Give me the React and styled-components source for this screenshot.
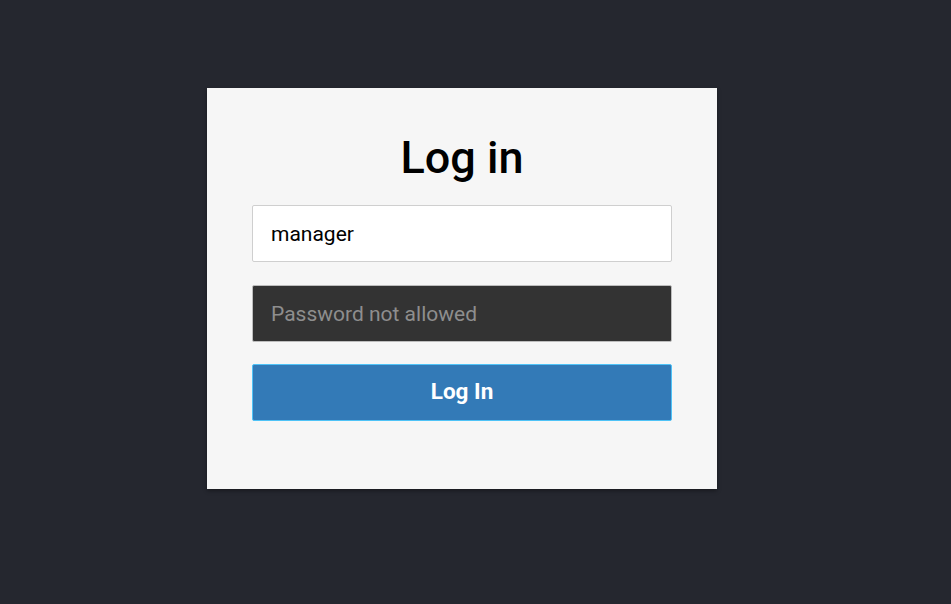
import React from "react";
import styled, { createGlobalStyle } from "styled-components";

const Global = createGlobalStyle`
  html, body { margin: 0; padding: 0; background: #25272f; }
  body { font-family: Roboto, "Liberation Sans", Arial, sans-serif; }
  * { box-sizing: border-box; }
`;

const Page = styled.div`
  width: 951px;
  height: 604px;
  padding: 88px 0 0 207px;
`;

const Card = styled.form`
  width: 510px;
  height: 401px;
  background: #f6f6f6;
  padding: 44px 45px 0;
  box-shadow: 0 2px 4px rgba(0, 0, 0, 0.35);
  display: flex;
  flex-direction: column;
`;

const Title = styled.h1`
  margin: 0 0 21px;
  font-size: 45px;
  line-height: 52px;
  font-weight: 500;
  color: #000;
  text-align: center;
`;

const Field = styled.input`
  display: block;
  width: 420px;
  height: 57px;
  margin: 0 0 23px;
  padding: 0 18px;
  font-family: Roboto, "Liberation Sans", Arial, sans-serif;
  font-size: 21px;
  border-radius: 2px;
  outline: none;
  border: 1px solid ${(p) => (p.$dark ? "#bdbdbd" : "#cfcfcf")};
  background: ${(p) => (p.$dark ? "#333333" : "#ffffff")};
  color: ${(p) => (p.$dark ? "#ddd" : "#000")};
  &::placeholder { color: #8e8e8e; opacity: 1; }
`;

const Button = styled.button`
  width: 420px;
  height: 57px;
  margin-top: -1px;
  background: #337ab7;
  border: 1px solid #4fc3f7;
  border-radius: 2px;
  color: #fff;
  font-family: Roboto, "Liberation Sans", Arial, sans-serif;
  font-size: 22.5px;
  font-weight: 700;
  padding: 0 0 3px;
  cursor: pointer;
`;

export default function App() {
  return (
    <>
      <Global />
      <Page>
        <Card onSubmit={(e) => e.preventDefault()}>
          <Title>Log in</Title>
          <Field defaultValue="manager" />
          <Field $dark type="password" placeholder="Password not allowed" />
          <Button type="submit">Log In</Button>
        </Card>
      </Page>
    </>
  );
}
